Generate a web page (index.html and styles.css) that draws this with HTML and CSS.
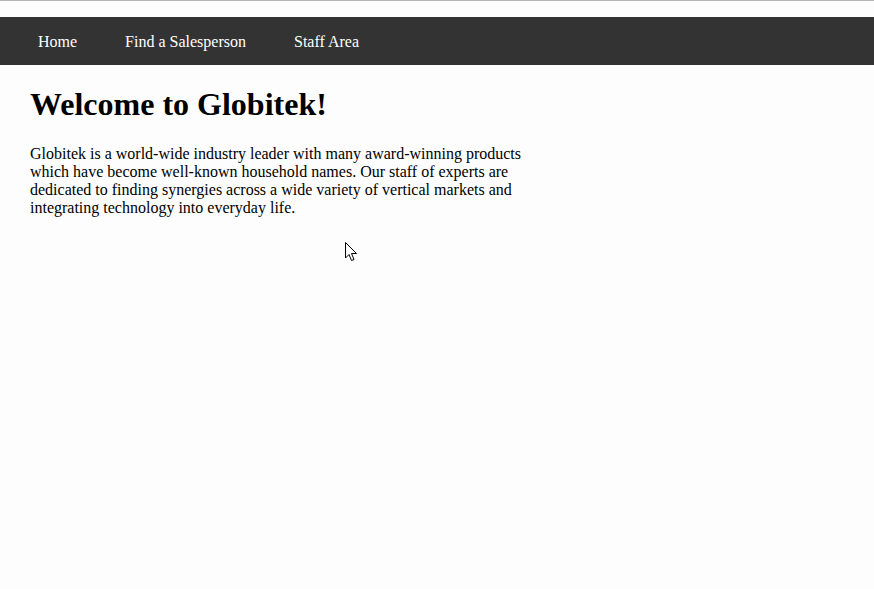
FILE: index.html
```html
<!DOCTYPE html>
<html>
<head>
<meta charset="utf-8">
<title>Globitek</title>
<link rel="stylesheet" href="styles.css">
</head>
<body>
<div class="topline"></div>
<nav class="nav">
  <a href="#">Home</a>
  <a href="#">Find a Salesperson</a>
  <a href="#">Staff Area</a>
</nav>
<main class="content">
  <h1>Welcome to Globitek!</h1>
  <p>Globitek is a world-wide industry leader with many award-winning products which have become well-known household names. Our staff of experts are dedicated to finding synergies across a wide variety of vertical markets and integrating technology into everyday life.</p>
</main>
<svg class="cursor" width="14" height="21" viewBox="0 0 14 21">
  <path d="M0.5 0.5 L0.5 16 L4 12.5 L6.5 18.5 L9 17.5 L6.5 11.5 L11.5 11.5 Z" fill="#fff" stroke="#000" stroke-width="1" stroke-linejoin="miter"/>
</svg>
</body>
</html>
```
FILE: styles.css
```css
html, body {
  margin: 0;
  padding: 0;
  background: #fdfdfd;
  font-family: "Liberation Serif", "Times New Roman", serif;
  font-size: 16px;
  color: #000;
}
.topline {
  height: 1px;
  background: #b4b4b4;
  margin-bottom: 16px;
}
.nav {
  display: flex;
  align-items: center;
  height: 48px;
  background: #333333;
  padding-left: 14px;
}
.nav a {
  color: #ffffff;
  text-decoration: none;
  padding: 2px 24px 0;
  font-size: 16px;
}
.content {
  padding: 0 30px;
  width: 500px;
}
.content h1 {
  font-size: 32px;
  font-weight: bold;
  margin: 21px 0 22px;
}
.content p {
  margin: 0;
  line-height: 18px;
}
.cursor {
  position: absolute;
  left: 345px;
  top: 242px;
}
```
